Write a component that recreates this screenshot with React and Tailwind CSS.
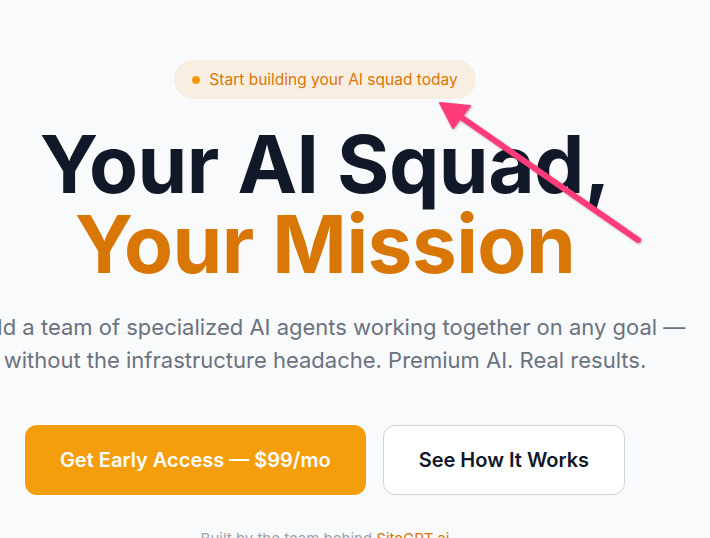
export default function App() {
  return (
    <div
      className="relative w-full h-[538px] overflow-hidden bg-[#f9fafb]"
      style={{ fontFamily: 'Inter, "Noto Sans", sans-serif' }}
    >
      {/* Hero, centred a little left of the window (cropped capture) */}
      <div className="w-[1000px] ml-[-175px] flex flex-col items-center pt-[60px] text-center">
        <div className="flex items-center gap-[9px] px-[18px] py-2 rounded-full bg-[#f9eee2] text-[#d97706] text-[15.5px] leading-[23px]">
          <span className="w-2 h-2 rounded-full bg-[#f59e0b]"></span>
          <span>Start building your AI squad today</span>
        </div>

        <h1 className="mt-[25px] text-[80px] leading-[80px] font-bold tracking-[-0.5px]">
          <span className="block text-[#111827]">Your AI Squad,</span>
          <span className="block text-[#d97706]">Your Mission</span>
        </h1>

        <p className="mt-[27px] text-[22px] leading-[32.5px] text-[#6b7280]">
          Build a team of specialized AI agents working together on any goal —
          <br />
          without the infrastructure headache. Premium AI. Real results.
        </p>

        <div className="mt-[49px] flex gap-[17px]">
          <button className="px-[35px] py-5 rounded-xl bg-[#f59e0b] text-white text-xl leading-7 font-semibold">
            Get Early Access — $99/mo
          </button>
          <button className="px-[35px] py-5 rounded-xl bg-white border border-[#d1d5db] text-[#111827] text-xl leading-7 font-semibold">
            See How It Works
          </button>
        </div>

        <p className="mt-8 text-[15px] leading-6 text-[#9ca3af]">
          Built by the team behind <span className="text-[#d97706]">SiteGPT.ai</span>
        </p>
      </div>

      {/* Annotation arrow */}
      <svg className="absolute inset-0 pointer-events-none" width="710" height="538" viewBox="0 0 710 538">
        <defs>
          <filter id="sh" x="-10%" y="-10%" width="120%" height="120%">
            <feDropShadow dx="1" dy="1" stdDeviation="1.2" floodColor="#000" floodOpacity="0.3" />
          </filter>
        </defs>
        <g filter="url(#sh)" fill="#ff3b7a" stroke="#ff3b7a" strokeLinecap="round" strokeLinejoin="round">
          <line x1="638" y1="240" x2="455" y2="113" strokeWidth="6" />
          <polygon points="440,103 470,106 453,128" strokeWidth="2" />
        </g>
      </svg>
    </div>
  );
}
